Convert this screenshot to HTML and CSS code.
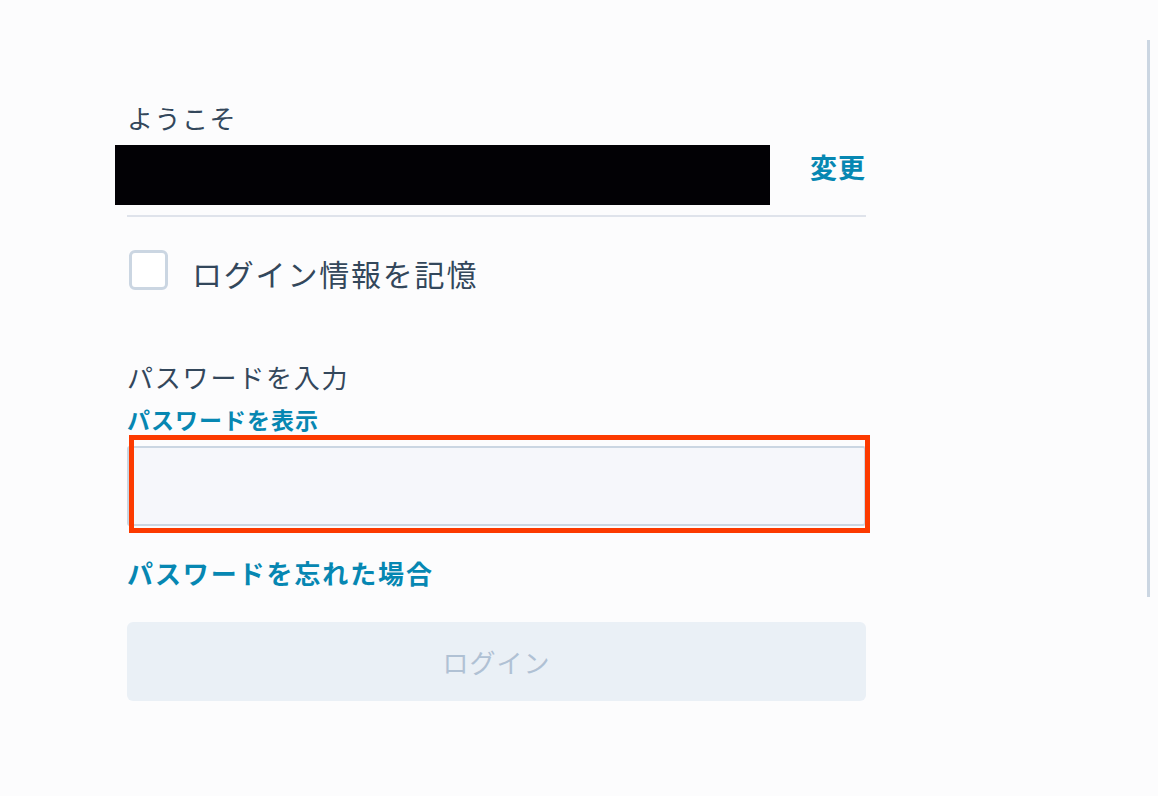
FILE: index.html
```html
<!DOCTYPE html>
<html lang="ja">
<head>
<meta charset="utf-8">
<title>ログイン</title>
<link rel="stylesheet" href="styles.css">
</head>
<body>
<div class="page">
  <main class="login">
    <div class="greeting">ようこそ</div>
    <div class="account-row">
      <div class="account-mask"></div>
      <a class="link change-link" href="#">変更</a>
    </div>
    <div class="divider"></div>
    <label class="remember">
      <span class="checkbox"></span>
      <span class="remember-text">ログイン情報を記憶</span>
    </label>
    <div class="field-label">パスワードを入力</div>
    <a class="link show-link" href="#">パスワードを表示</a>
    <div class="input-wrap">
      <input class="password" type="password">
      <div class="highlight"></div>
    </div>
    <a class="link forgot-link" href="#">パスワードを忘れた場合</a>
    <button class="login-btn" disabled>ログイン</button>
  </main>
  <div class="rail"></div>
</div>
</body>
</html>
```
FILE: styles.css
```css
html, body {
  margin: 0;
  padding: 0;
  background: #fcfcfd;
}
body {
  font-family: "Noto Sans CJK JP", "Noto Sans", sans-serif;
  color: #33475b;
}
.page {
  display: flex;
  width: 1158px;
  height: 796px;
}
.login {
  width: 739px;
  margin-left: 127px;
  padding-top: 100px;
  display: flex;
  flex-direction: column;
  align-items: flex-start;
}
.rail {
  margin-left: auto;
  margin-right: 8px;
  margin-top: 40px;
  width: 3px;
  height: 557px;
  background: #cbd6e2;
}
.greeting {
  font-size: 26px;
  line-height: 36px;
  height: 36px;
  letter-spacing: 1.5px;
}
.account-row {
  margin-top: 9px;
  width: 100%;
  height: 60px;
  display: flex;
  align-items: flex-start;
  justify-content: space-between;
}
.account-mask {
  margin-left: -12px;
  width: 655px;
  height: 60px;
  background: #020105;
}
.link {
  color: #0687b2;
  font-weight: 700;
  text-decoration: none;
}
.change-link {
  font-size: 27px;
  line-height: 36px;
  margin-top: 4px;
  letter-spacing: 1px;
}
.divider {
  margin-top: 10px;
  width: 100%;
  height: 2px;
  background: #dfe3eb;
}
.remember {
  margin-top: 33px;
  display: flex;
  align-items: center;
  height: 40px;
  margin-left: 2px;
}
.checkbox {
  box-sizing: border-box;
  width: 39px;
  height: 40px;
  border: 3px solid #cbd6e2;
  border-radius: 6px;
  background: #fff;
}
.remember-text {
  margin-left: 24px;
  font-size: 30px;
  line-height: 40px;
  padding-top: 6px;
  letter-spacing: 1.8px;
}
.field-label {
  margin-top: 69px;
  font-size: 26px;
  line-height: 36px;
  letter-spacing: 1.8px;
}
.show-link {
  margin-top: 9px;
  font-size: 23px;
  line-height: 30px;
  letter-spacing: 1px;
}
.input-wrap {
  position: relative;
  margin-top: 12px;
  width: 100%;
  height: 80px;
}
.password {
  box-sizing: border-box;
  display: block;
  width: 100%;
  height: 80px;
  margin: 0;
  border: 2px solid #cbd6e2;
  border-radius: 3px;
  background: #f6f7fb;
  outline: none;
}
.highlight {
  position: absolute;
  left: 2px;
  top: -11px;
  right: -4px;
  bottom: -7px;
  border: 5px solid #fc3a00;
  pointer-events: none;
}
.forgot-link {
  margin-top: 29px;
  font-size: 26px;
  line-height: 36px;
  letter-spacing: 1.9px;
}
.login-btn {
  margin-top: 31px;
  width: 100%;
  height: 79px;
  border: none;
  border-radius: 6px;
  background: #eaf0f6;
  color: #b0c1d4;
  font-family: "Noto Sans CJK JP", "Noto Sans", sans-serif;
  font-size: 26px;
  letter-spacing: 1px;
  padding: 0;
}
```
